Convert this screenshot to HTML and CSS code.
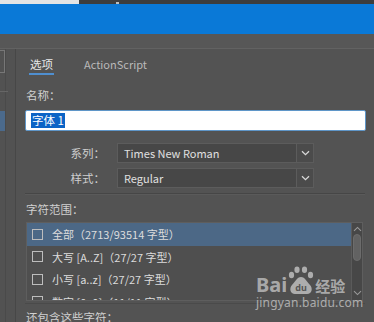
FILE: index.html
```html
<!DOCTYPE html>
<html lang="zh-CN">
<head>
<meta charset="utf-8">
<title>字体嵌入</title>
<link rel="stylesheet" href="styles.css">
</head>
<body>
<div class="topstrip"><div class="ts-light"></div><div class="ts-dark"><span class="ts-tick"></span></div></div>
<div class="titlebar"></div>
<div class="subbar"></div>
<div class="main">
  <aside class="side">
    <div class="side-inner">
      <div class="side-box"></div>
      <div class="side-line"></div>
      <div class="side-sel"></div>
    </div>
  </aside>
  <section class="panel">
    <nav class="tabs">
      <span class="tab active">选项</span>
      <span class="tab">ActionScript</span>
    </nav>
    <div class="lbl">名称：</div>
    <div class="input"><span class="selected">字体 1</span></div>
    <div class="frow first">
      <span class="flabel">系列：</span>
      <div class="select">Times New Roman</div>
      <div class="chev"><svg width="9" height="6" viewBox="0 0 9 6"><path d="M1 1.2 L4.5 4.6 L8 1.2" fill="none" stroke="#d8d8d8" stroke-width="1.3"/></svg></div>
    </div>
    <div class="frow">
      <span class="flabel">样式：</span>
      <div class="select">Regular</div>
      <div class="chev"><svg width="9" height="6" viewBox="0 0 9 6"><path d="M1 1.2 L4.5 4.6 L8 1.2" fill="none" stroke="#d8d8d8" stroke-width="1.3"/></svg></div>
    </div>
    <div class="sep"></div>
    <div class="lbl range">字符范围：</div>
    <div class="list">
      <div class="rows">
        <div class="row hl"><span class="cb"></span>全部（2713/93514 字型）</div>
        <div class="row"><span class="cb"></span>大写 [A..Z]（27/27 字型）</div>
        <div class="row"><span class="cb"></span>小写 [a..z]（27/27 字型）</div>
        <div class="row"><span class="cb"></span>数字 [0..9]（11/11 字型）</div>
      </div>
      <div class="sbar">
        <svg class="sarrow" width="9" height="6" viewBox="0 0 9 6"><path d="M1 4.8 L4.5 1.4 L8 4.8" fill="none" stroke="#9a9a9a" stroke-width="1.1"/></svg>
        <div class="thumb"></div>
        <div class="sfill"></div>
        <svg class="sarrow" width="9" height="6" viewBox="0 0 9 6"><path d="M1 1.2 L4.5 4.6 L8 1.2" fill="none" stroke="#9a9a9a" stroke-width="1.1"/></svg>
      </div>
    </div>
    <div class="sep2"></div>
    <div class="lbl more">还包含这些字符：</div>
  </section>
</div>
<div class="watermark">
  <div class="wm-top">
    <span class="wm-bai">Bai</span>
    <svg class="wm-paw" width="26" height="30" viewBox="0 0 26 30">
      <ellipse cx="3.5" cy="9" rx="2.6" ry="3.2" fill="currentColor"/>
      <ellipse cx="9" cy="3.8" rx="2.6" ry="3.2" fill="currentColor"/>
      <ellipse cx="16.5" cy="3.8" rx="2.6" ry="3.2" fill="currentColor"/>
      <ellipse cx="22.5" cy="9" rx="2.6" ry="3.2" fill="currentColor"/>
      <path d="M13 11 C9 11 7 16 4 19 C1 22 2 28 7 28 L19 28 C24 28 25 22 22 19 C19 16 17 11 13 11 Z" fill="currentColor"/>
      <text x="13" y="25" text-anchor="middle" font-family="Noto Sans, sans-serif" font-size="9" font-weight="700" fill="#555">du</text>
    </svg>
    <span class="wm-jy">经验</span>
  </div>
  <div class="wm-url">jingyan.baidu.com</div>
</div>
</body>
</html>
```
FILE: styles.css
```css
* { box-sizing: border-box; }
html, body { margin: 0; padding: 0; }
body {
  width: 374px;
  height: 322px;
  overflow: hidden;
  background: #535353;
  font-family: "Noto Sans CJK SC", "Noto Sans", sans-serif;
  font-size: 11px;
  color: #d2d2d2;
  position: relative;
}
.topstrip { height: 4px; display: flex; }
.ts-light { width: 79px; background: #e4e4e4; }
.ts-dark { flex: 1; background: #3d3d3d; position: relative; }
.ts-tick { position: absolute; left: 37px; top: 2px; width: 3px; height: 2px; background: #bdbdbd; }
.titlebar { height: 30px; background: #0a79d7; }
.subbar { height: 15px; background: #575757; border-bottom: 1px solid #626262; }
.main { display: flex; height: 273px; }
.side { width: 17px; border-right: 1px solid #474747; background: #525252; }
.side-inner { width: 6px; height: 100%; border-right: 1px solid #4a4a4a; padding-top: 1px; }
.side-box { height: 23px; border: 1px solid #777; border-left: none; }
.side-line { height: 1px; background: #666; margin-top: 18px; width: 8px; }
.side-sel { height: 20px; background: #4b6a8c; margin-top: 19px; }
.panel { flex: 1; padding-left: 9px; padding-right: 8px; }
.tabs { display: flex; gap: 29px; padding-top: 6px; margin-left: 4px; }
.tab {
  font-size: 11px; line-height: 18px; color: #bababa;
  padding: 0 1px; border-bottom: 2px solid transparent;
}
.tab.active { color: #e8e8e8; font-size: 11.5px; border-bottom-color: #4f8fd0; }
.lbl {
  font-size: 11.5px; line-height: 18px; color: #d0d0d0;
  margin-top: 11px; margin-left: 1px;
}
.input {
  margin-top: 6px; height: 21px; width: 341px;
  background: #fff; border: 1px solid #5f96c8; border-radius: 2px;
  padding-left: 5px; display: flex; align-items: center;
}
.selected {
  background: #0b64c6; color: #fff;
  font-size: 11.5px; line-height: 15px; padding: 0 1px;
}
.frow { display: flex; align-items: center; margin-top: 5px; }
.frow.first { margin-top: 12px; }
.flabel {
  width: 80px; text-align: right;
  font-size: 11.5px; color: #cfcfcf; margin-right: 12px;
}
.select {
  width: 179px; height: 20px; background: #474747;
  border: 1px solid #5c5c5c; border-right: none;
  font-size: 11px; line-height: 18px; color: #e0e0e0; padding-left: 6px;
}
.chev {
  width: 18px; height: 20px; background: #4b4b4b; border: 1px solid #5c5c5c;
  display: flex; align-items: center; justify-content: center;
}
.sep { margin-top: 5px; height: 1px; background: #464646; width: 340px; border-bottom: 1px solid #5a5a5a; box-sizing: content-box; }
.lbl.range { margin-top: 5px; }
.list {
  margin-top: 4px; margin-left: 1px; width: 337px; height: 79px;
  border: 1px solid #5e5e5e; background: #4f4f4f;
  display: flex; overflow: hidden;
}
.rows { flex: 1; overflow: hidden; }
.row {
  height: 22.5px; display: flex; align-items: center;
  font-size: 11px; color: #dcdcdc; padding-left: 5px; white-space: nowrap;
}
.row.hl { background: #4c6886; }
.cb { width: 11px; height: 11px; border: 1px solid #bdbdbd; margin-right: 9px; flex: none; }
.sbar {
  width: 11px; background: #474747; border-left: 1px solid #5a5a5a;
  display: flex; flex-direction: column; align-items: center; padding: 3px 0 4px;
}
.sarrow { flex: none; }
.thumb { width: 8px; height: 27px; margin-top: 2px; border-radius: 4px; background: #626262; border: 1px solid #6c6c6c; }
.sfill { flex: 1; }
.sep2 { height: 1px; background: #4a4a4a; margin-top: 2px; width: 340px; }
.lbl.more { margin-top: 4px; }
.watermark {
  position: absolute; left: 256px; top: 266px;
  color: rgba(230,230,230,0.62);
}
.wm-top { display: flex; align-items: flex-end; }
.wm-bai { font-family: "Noto Sans", sans-serif; font-size: 20px; font-weight: 700; line-height: 22px; margin-right: 1px; }
.wm-paw { margin-right: 1px; }
.wm-jy { font-size: 15px; font-weight: 700; line-height: 20px; }
.wm-url { font-family: "Noto Sans", sans-serif; font-size: 12px; line-height: 14px; letter-spacing: 0.2px; }
```
